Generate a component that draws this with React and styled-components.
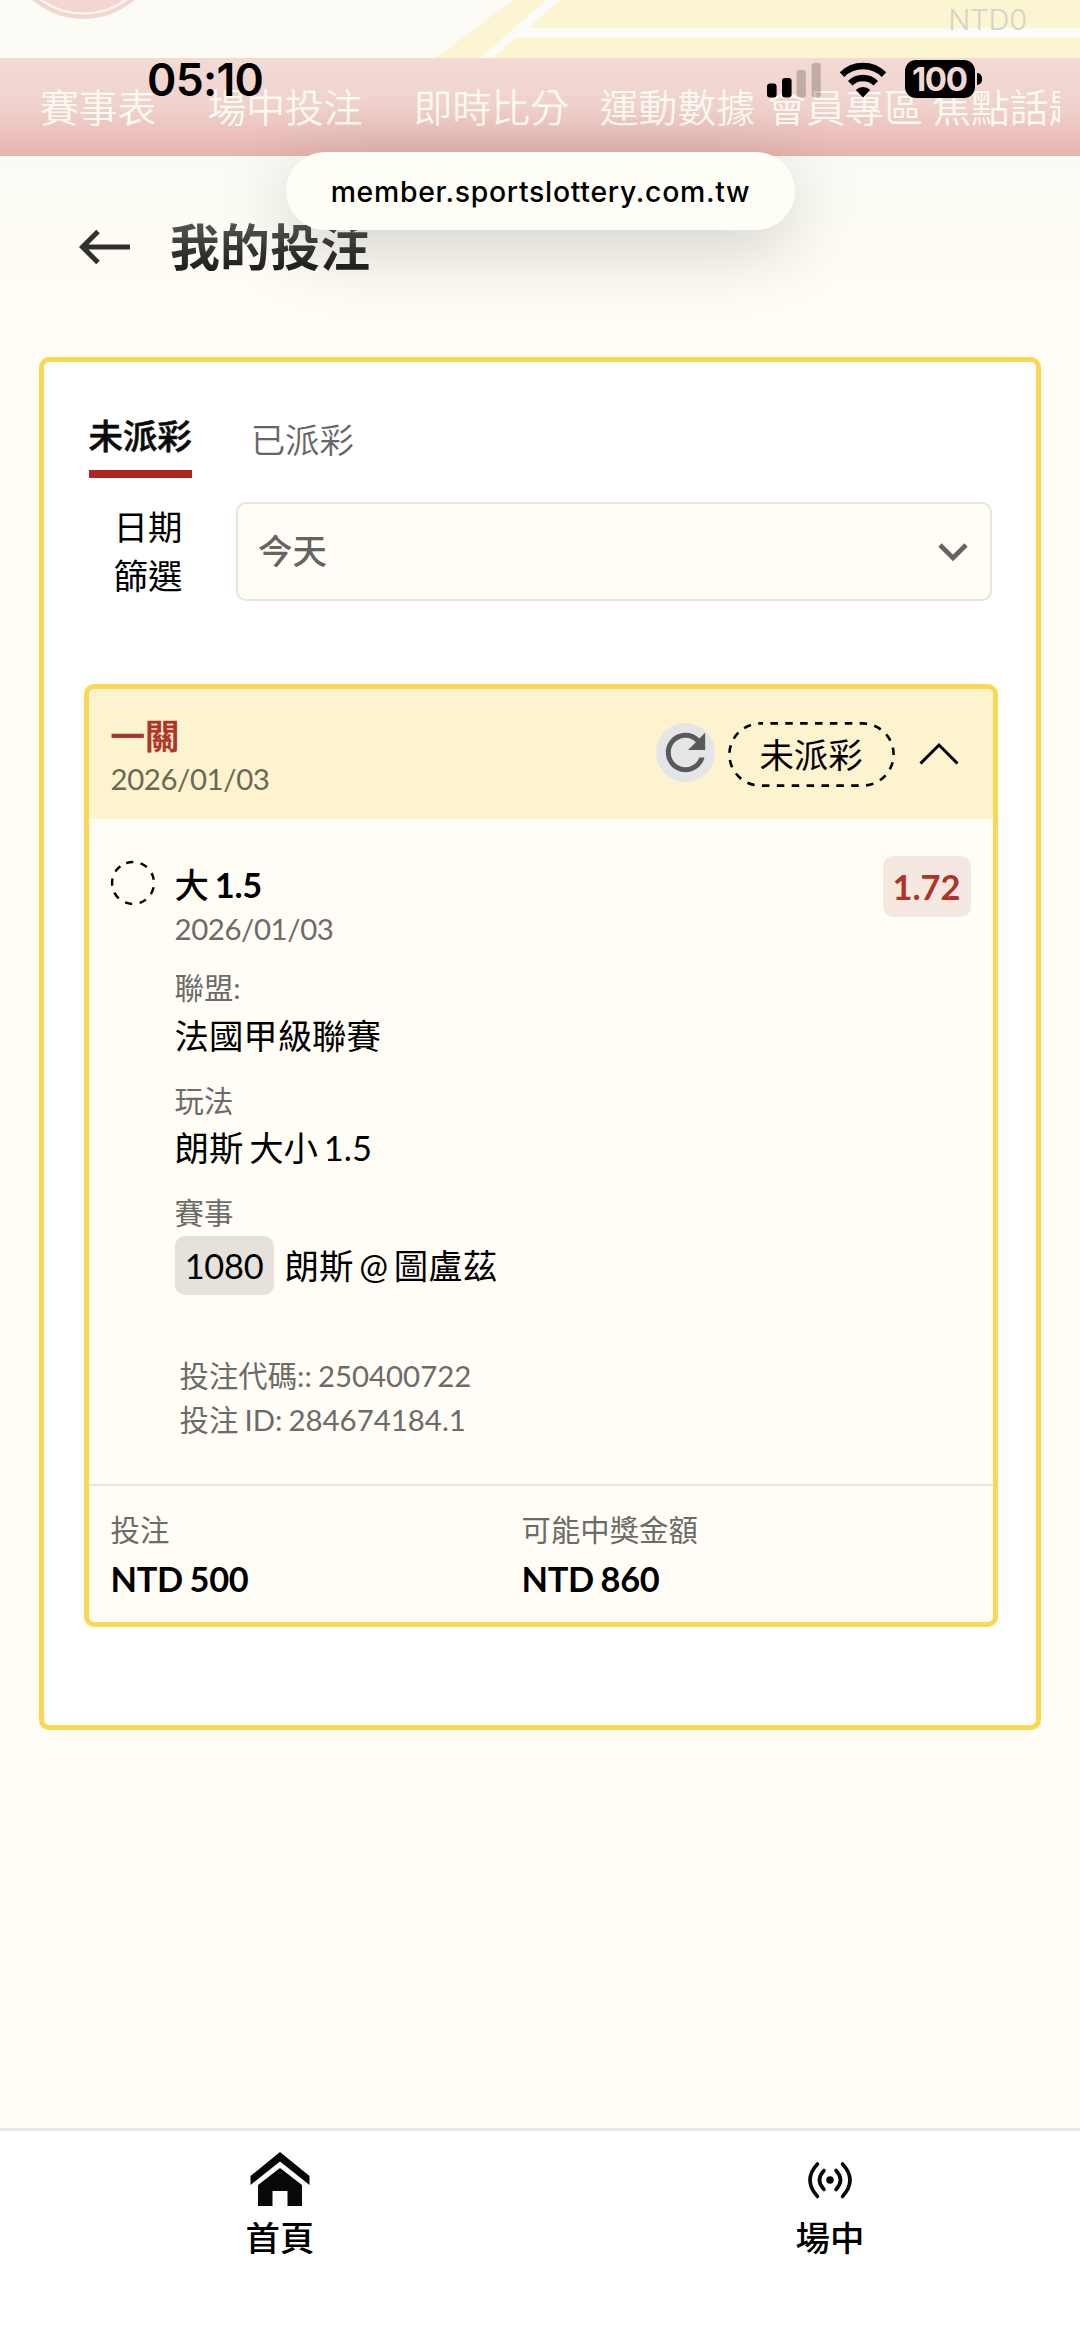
import React from 'react';
import styled, { createGlobalStyle } from 'styled-components';

const GlobalStyle = createGlobalStyle`
  *, *::before, *::after { box-sizing: border-box; }
  html, body { margin: 0; padding: 0; }
  body {
    width: 1080px;
    background: #fffdf5;
    color: #000;
    font-family: Lato, "Noto Sans CJK TC", sans-serif;
    word-spacing: -1.4px;
    -webkit-font-smoothing: antialiased;
  }
`;

const Screen = styled.div`
  position: relative;
  width: 1080px;
  height: 2347px;
  overflow: hidden;
  display: flex;
  flex-direction: column;
  background: #fffdf5;
`;

/* ---------- site header ---------- */

const Banner = styled.header`
  position: relative;
  height: 58px;
  flex: none;
  display: flex;
  justify-content: flex-end;
  padding-right: 53px;
  background: #fcfbf6;
`;

const BannerArt = styled.svg`
  position: absolute;
  inset: 0;
`;

const Balance = styled.span`
  position: relative;
  font: 300 29px/40px Inter, sans-serif;
  letter-spacing: -0.1px;
  color: #d3d3cd;
`;

const Nav = styled.nav`
  flex: none;
  display: flex;
  width: 1080px;
  height: 98px;
  padding-left: 40px;
  background: linear-gradient(#f3dad4 0%, #f0d2cd 50%, #e7b4ae 100%);
`;

const NavClip = styled.div`
  display: flex;
  width: 1020px;
  overflow: hidden;
`;

const NavItem = styled.a`
  flex: none;
  margin-left: ${(p) => p.$gap}px;
  font-size: 38.8px;
  font-weight: 350;
  line-height: 98px;
  white-space: nowrap;
  color: #fcfaf3;
`;

/* ---------- page heading ---------- */

const PageHead = styled.div`
  flex: none;
  height: 201px;
  padding: 55px 0 0 79px;
  display: flex;
  align-items: flex-start;
  background: linear-gradient(#fbfaf4, #fffdf5 150px);
`;

const BackIcon = styled.svg`
  width: 52px;
  height: 36px;
  margin-top: 18px;
`;

const PageTitle = styled.h1`
  margin: 0 0 0 39px;
  font-size: 49.8px;
  font-weight: 700;
  line-height: 73px;
  letter-spacing: 0.3px;
  color: transparent;
  background: linear-gradient(#555 16%, #1d1d1d 82%);
  background-clip: text;
`;

/* ---------- bets panel ---------- */

const Panel = styled.main`
  flex: none;
  width: 1002px;
  height: 1373px;
  margin-left: 39px;
  padding-top: 46px;
  border: 5px solid #fad854;
  border-radius: 10px;
  background: #fff;
`;

const Tabs = styled.div`
  display: flex;
  align-items: flex-start;
  gap: 59px;
  padding-left: 44.5px;
`;

const Tab = styled.button`
  padding: ${(p) => (p.$active ? '0 0 6px' : '4px 0 0')};
  border: 0;
  border-bottom: ${(p) => (p.$active ? '8px solid #ae2621' : '0')};
  background: none;
  font-family: inherit;
  font-size: 34.4px;
  line-height: 56px;
  font-weight: ${(p) => (p.$active ? 500 : 350)};
  -webkit-text-stroke: ${(p) => (p.$active ? '0.6px' : '0')};
  color: ${(p) => (p.$active ? '#0b0b0b' : '#666')};
`;

const FilterRow = styled.div`
  display: flex;
  margin-top: 24px;
  padding: 0 44.5px 0 69.5px;
`;

const FilterLabel = styled.label`
  width: 70px;
  margin-right: 52.5px;
  font-size: 34.4px;
  line-height: 49px;
  color: #000;
`;

const SelectBox = styled.div`
  flex: 1;
  display: flex;
  justify-content: space-between;
  align-items: center;
  height: 99px;
  padding: 0 22px 0 20px;
  border: 2.6px solid #e8e4de;
  border-radius: 10px;
  background: #fffdf6;
  color: #666460;
`;

const SelectValue = styled.span`
  padding-bottom: 2px;
  font-size: 34.4px;
  font-weight: 500;
  line-height: 50px;
`;

const Card = styled.article`
  width: 914px;
  height: 943px;
  margin: 83px 0 0 39.5px;
  border: 5px solid #fad854;
  border-radius: 10px;
  overflow: hidden;
  background: #fffdf6;
`;

const CardHead = styled.div`
  display: flex;
  justify-content: space-between;
  height: 130px;
  padding: 25px 34px 0 22px;
  background: #fdf3cf;
`;

const CardTitle = styled.div`
  font-size: 34.4px;
  font-weight: 500;
  -webkit-text-stroke: 0.6px;
  line-height: 44px;
  color: #ad3427;
`;

const Small = styled.div`
  font-size: 29.4px;
  line-height: 44px;
  color: #6b6b68;
`;

const DateText = styled(Small)`
  line-height: ${(p) => p.$line || 43}px;
  letter-spacing: -0.4px;
  color: ${(p) => p.$tone || '#6b6b68'};
`;

const HeadActions = styled.div`
  display: flex;
  align-items: center;
  height: 80px;
`;

const RefreshButton = styled.button`
  display: flex;
  width: 59px;
  height: 59px;
  margin: 0 13px 3px 0;
  padding: 0;
  border: 0;
  border-radius: 50%;
  background: #e4e5e7;
`;

const StatusBadge = styled.span`
  position: relative;
  width: 167px;
  height: 65px;
  margin-right: 24px;
  text-align: center;
  font-size: 34.4px;
  line-height: 65px;
`;

const DashedOutline = styled.svg`
  position: absolute;
  inset: 0;
`;

const Selection = styled.section`
  display: flex;
  height: 665px;
  padding: 37px 22px 0 21px;
`;

const Ring = styled.svg`
  flex: none;
  width: 46px;
  height: 46px;
  margin: 4px 19px 0 0;
`;

const Details = styled.div`
  flex: 1;
  padding-top: 7px;
`;

const Pick = styled.div`
  font-size: 34.4px;
  font-weight: 700;
  line-height: 44px;
  letter-spacing: -0.4px;
  word-spacing: -1.6px;
`;

const CjkMedium = styled.span`
  font-weight: 500;
`;

const Field = styled.div`
  margin-top: ${(p) => p.$gap || 17.6}px;
`;

const FieldValue = styled.div`
  display: flex;
  align-items: center;
  gap: 11px;
  height: ${(p) => (p.$tall ? 61 : 51)}px;
  font-size: 34.4px;
  line-height: 50px;
  word-spacing: -2.9px;
`;

const MatchNo = styled.span`
  display: inline-block;
  width: 99px;
  height: 59px;
  border-radius: 10px;
  text-align: center;
  line-height: 60px;
  letter-spacing: -0.3px;
  background: #e5e2dc;
`;

const Codes = styled.div`
  margin-top: 57.5px;
  padding-left: 5px;
`;

const Odds = styled.strong`
  flex: none;
  width: 88px;
  height: 61px;
  border-radius: 10px;
  text-align: center;
  font-size: 34.4px;
  line-height: 62px;
  color: #ad3427;
  background: #f5e8e0;
`;

const Totals = styled.footer`
  display: grid;
  grid-template-columns: 411px 1fr;
  height: 138px;
  padding: 22px 22px 0;
  border-top: 2.6px solid #e8e4de;
`;

const Amount = styled.div`
  font-size: 34.4px;
  font-weight: 700;
  line-height: 54px;
  letter-spacing: -0.3px;
`;

/* ---------- bottom tab bar ---------- */

const TabBar = styled.nav`
  flex: none;
  display: grid;
  grid-template-columns: 550px 550px;
  height: 219px;
  margin-top: auto;
  padding-left: 5px;
  border-top: 3px solid #e6e8e5;
  background: #fff;
`;

const TabBarItem = styled.a`
  display: flex;
  flex-direction: column;
  align-items: center;
  font-size: 34.4px;
  font-weight: 500;
  line-height: 50px;
`;

const TabIcon = styled.svg`
  width: 60px;
  height: 56px;
  margin: 20px 0 6px;
`;

/* ---------- system overlay ---------- */

const UrlPill = styled.div`
  position: absolute;
  left: 286px;
  top: 152px;
  width: 509px;
  height: 78px;
  border-radius: 39px;
  border: 1px solid #fff;
  background: #fffef6;
  box-shadow: 0 18px 76px rgba(0, 0, 0, 0.18);
  text-align: center;
  font: 500 28.4px/77px Inter, sans-serif;
  letter-spacing: 0.7px;
`;

const SystemBar = styled.div`
  position: absolute;
  left: 0;
  right: 0;
  top: 58px;
  height: 44px;
  display: flex;
  align-items: center;
  padding: 0 98px 0 147px;
`;

const Clock = styled.time`
  flex: 1;
  font: 600 44.5px/44px Inter, sans-serif;
  letter-spacing: -0.7px;
`;

const WifiIcon = styled.svg`
  margin-left: 18px;
`;

const Battery = styled.span`
  position: relative;
  width: 70px;
  height: 38px;
  margin: -2px 7px 0 18px;
  border-radius: 11px;
  background: #000;
  text-align: center;
  font: 700 33px/38px Inter, sans-serif;
  letter-spacing: -1.4px;
  text-indent: -1.5px;
  color: #f2d8d3;

  &::after {
    content: '';
    position: absolute;
    left: 72px;
    top: 13px;
    width: 5px;
    height: 12px;
    border-radius: 0 6px 6px 0;
    background: #000;
  }
`;

const navItems = [
  ['賽事表', 0],
  ['場中投注', 51],
  ['即時比分', 51],
  ['運動數據', 31],
  ['會員專區', 12.5],
  ['焦點話題', 9.5],
];

export default function App() {
  return (
    <>
      <GlobalStyle />
      <Screen lang="zh-Hant">
        <Banner>
          <BannerArt width="1080" height="58" viewBox="0 0 1080 58">
            <circle cx="83.5" cy="-59" r="78" fill="#f3d5d2" />
            <circle cx="83.5" cy="-59" r="72.5" fill="none" stroke="#fcf8f4" strokeWidth="2" />
            <path d="M513 0H1080V58H435.6Z" fill="#fbf5d1" />
            <path d="M546 0H560L528 28H1080V38H515.5L493 58H480Z" fill="#fcfbf6" />
          </BannerArt>
          <Balance>NTD0</Balance>
        </Banner>

        <Nav>
          <NavClip>
            {navItems.map(([label, gap]) => (
              <NavItem key={label} $gap={gap}>{label}</NavItem>
            ))}
          </NavClip>
        </Nav>

        <PageHead>
          <BackIcon viewBox="0 0 52 36" fill="none" stroke="#30302e" strokeWidth="5">
            <path d="M51 18H4M19 2.5L3.5 18L19 33.5" />
          </BackIcon>
          <PageTitle>我的投注</PageTitle>
        </PageHead>

        <Panel>
          <Tabs>
            <Tab $active>未派彩</Tab>
            <Tab>已派彩</Tab>
          </Tabs>

          <FilterRow>
            <FilterLabel>日期篩選</FilterLabel>
            <SelectBox>
              <SelectValue>今天</SelectValue>
              <svg width="30" height="20" viewBox="0 0 30 20" fill="none" stroke="#666460" strokeWidth="4.6">
                <path d="M2 3L15 16L28 3" />
              </svg>
            </SelectBox>
          </FilterRow>

          <Card>
            <CardHead>
              <div>
                <CardTitle>一關</CardTitle>
                <DateText $line={41} $tone="#6b6857">2026/01/03</DateText>
              </div>
              <HeadActions>
                <RefreshButton aria-label="refresh">
                  <svg width="59" height="59" viewBox="0 0 24 24" fill="#58595b">
                    <path d="M17.65 6.35A7.958 7.958 0 0 0 12 4c-4.42 0-7.99 3.58-7.99 8s3.57 8 7.99 8c3.73 0 6.84-2.55 7.73-6h-2.08A5.99 5.99 0 0 1 12 18c-3.31 0-6-2.69-6-6s2.69-6 6-6c1.66 0 3.14.69 4.22 1.78L13 11h7V4l-2.35 2.35z" />
                  </svg>
                </RefreshButton>
                <StatusBadge>
                  <DashedOutline width="167" height="65" viewBox="0 0 167 65" fill="none">
                    <rect x="1.4" y="1.4" width="164.2" height="62.2" rx="31.1" stroke="#000" strokeWidth="2.6" strokeDasharray="7.5 7.38" strokeDashoffset="5" />
                  </DashedOutline>
                  未派彩
                </StatusBadge>
                <svg width="40" height="24" viewBox="0 0 40 24" fill="none" stroke="#000" strokeWidth="3">
                  <path d="M1.5 21.5L20 3L38.5 21.5" />
                </svg>
              </HeadActions>
            </CardHead>

            <Selection>
              <Ring viewBox="0 0 46 46" fill="none">
                <circle cx="23" cy="23" r="21" stroke="#000" strokeWidth="2.4" strokeDasharray="7.2 7.46" transform="rotate(-109 23 23)" />
              </Ring>
              <Details>
                <Pick><CjkMedium>大</CjkMedium> 1.5</Pick>
                <DateText>2026/01/03</DateText>
                <Field $gap={16}>
                  <Small>聯盟:</Small>
                  <FieldValue>法國甲級聯賽</FieldValue>
                </Field>
                <Field>
                  <Small>玩法</Small>
                  <FieldValue>朗斯 大小 1.5</FieldValue>
                </Field>
                <Field>
                  <Small>賽事</Small>
                  <FieldValue $tall>
                    <MatchNo>1080</MatchNo>
                    朗斯 @ 圖盧茲
                  </FieldValue>
                </Field>
                <Codes>
                  <Small>投注代碼:: 250400722</Small>
                  <Small>投注 ID: 284674184.1</Small>
                </Codes>
              </Details>
              <Odds>1.72</Odds>
            </Selection>

            <Totals>
              <div>
                <Small>投注</Small>
                <Amount>NTD 500</Amount>
              </div>
              <div>
                <Small>可能中獎金額</Small>
                <Amount>NTD 860</Amount>
              </div>
            </Totals>
          </Card>
        </Panel>

        <TabBar>
          <TabBarItem>
            <TabIcon viewBox="0 0 60 56" fill="#080808">
              <path d="M30 1L59.5 25V34L30 10.5L0.5 34V25Z" />
              <path d="M30 17L52 34V55H37.5V40H22.5V55H8V34Z" />
            </TabIcon>
            首頁
          </TabBarItem>
          <TabBarItem>
            <TabIcon viewBox="0 0 60 56" fill="none" stroke="#0a0a0a" strokeWidth="3.6" strokeLinecap="round">
              <circle cx="30" cy="29" r="3.8" fill="#0a0a0a" stroke="none" />
              <path d="M24 19.5Q15 29 24 38.5M36 19.5Q45 29 36 38.5" />
              <path d="M17.5 13Q2.5 29 17.5 45.5M42.5 13Q57.5 29 42.5 45.5" />
            </TabIcon>
            場中
          </TabBarItem>
        </TabBar>

        <UrlPill>member.sportslottery.com.tw</UrlPill>
        <SystemBar>
          <Clock>05:10</Clock>
          <svg width="54" height="36" viewBox="0 0 54 36">
            <rect x="0" y="21.5" width="9.6" height="14" rx="3" />
            <rect x="15" y="16" width="9.6" height="19.5" rx="3" />
            <rect x="29.6" y="8" width="9.2" height="27.5" rx="3" fillOpacity="0.2" />
            <rect x="44.6" y="1" width="9.2" height="34.5" rx="3" fillOpacity="0.2" />
          </svg>
          <WifiIcon width="48" height="36" viewBox="0 0 48 36" fill="none" stroke="#000" strokeWidth="6.4">
            <path d="M3 12.6A30 30 0 0 1 45 12.6" />
            <path d="M11.2 21.2A18.3 18.3 0 0 1 36.8 21.2" />
            <path d="M24 35.5L16.8 28A10.2 10.2 0 0 1 31.2 28Z" fill="#000" stroke="none" />
          </WifiIcon>
          <Battery>100</Battery>
        </SystemBar>
      </Screen>
    </>
  );
}
